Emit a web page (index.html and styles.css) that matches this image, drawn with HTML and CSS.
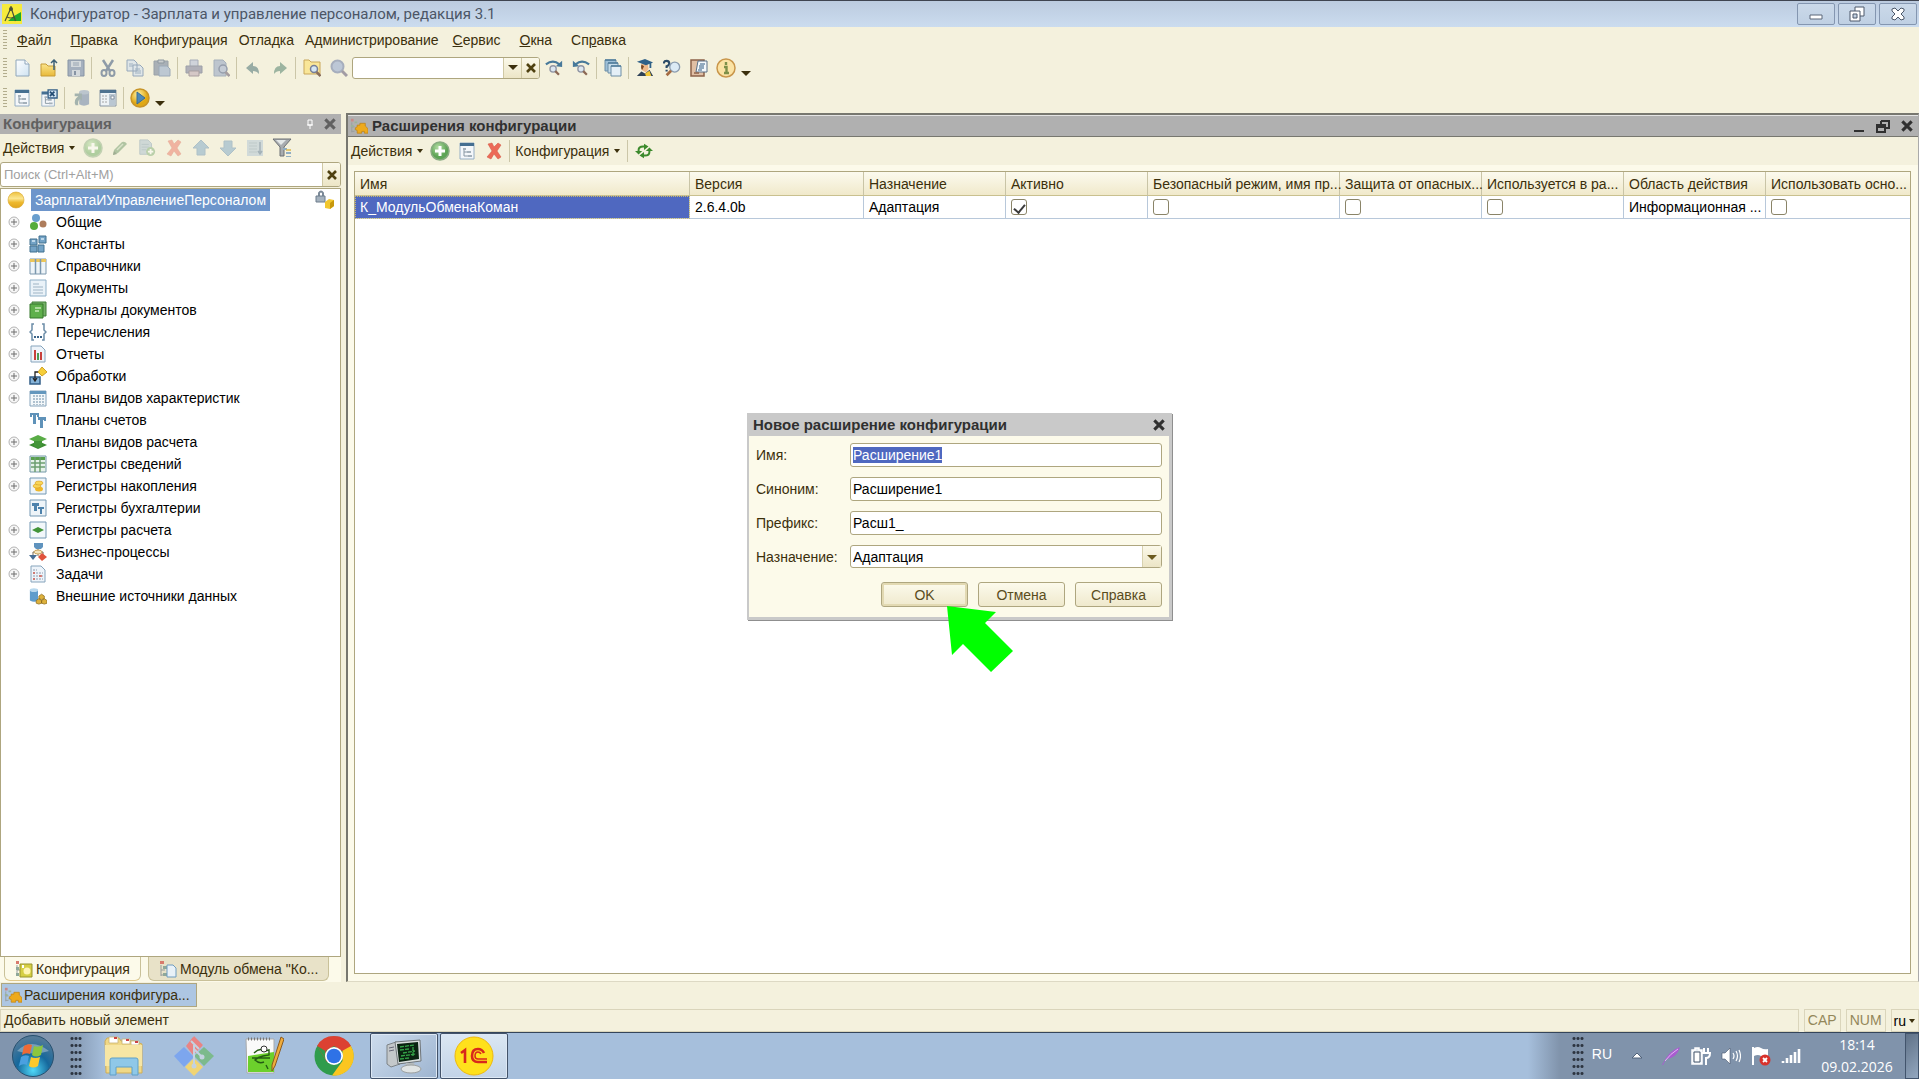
FILE: index.html
```html
<!DOCTYPE html>
<html lang="ru">
<head>
<meta charset="utf-8">
<title>Конфигуратор</title>
<link rel="stylesheet" href="styles.css">
</head>
<body>
<svg class="defs" aria-hidden="true">
  <defs>
    <linearGradient id="g-paper" x1="0" y1="0" x2="1" y2="1"><stop offset="0" stop-color="#fff"/><stop offset="1" stop-color="#cfe3f2"/></linearGradient>
    <linearGradient id="g-folder" x1="0" y1="0" x2="0" y2="1"><stop offset="0" stop-color="#fbe58c"/><stop offset="1" stop-color="#e8b93a"/></linearGradient>
    <radialGradient id="g-gold" cx=".4" cy=".3"><stop offset="0" stop-color="#fff3a8"/><stop offset="1" stop-color="#e0a814"/></radialGradient>
    <linearGradient id="g-ball" x1="0" y1="0" x2="0" y2="1"><stop offset="0" stop-color="#eec03c"/><stop offset=".4" stop-color="#fbe690"/><stop offset=".65" stop-color="#eeb92e"/><stop offset="1" stop-color="#e0a41c"/></linearGradient>
    <radialGradient id="g-green" cx=".4" cy=".3"><stop offset="0" stop-color="#b4dca4"/><stop offset="1" stop-color="#5da455"/></radialGradient>
    <radialGradient id="g-orb" cx=".5" cy=".85" r=".8"><stop offset="0" stop-color="#4fd8f8"/><stop offset=".5" stop-color="#16689c"/><stop offset="1" stop-color="#547a98"/></radialGradient>
  </defs>
  <symbol id="i-new" viewBox="0 0 18 18"><path d="M3 1h9l4 4v12H3z" fill="url(#g-paper)" stroke="#8fa6ba"/><path d="M12 1v4h4" fill="#fff" stroke="#8fa6ba"/></symbol>
  <symbol id="i-open" viewBox="0 0 18 18"><path d="M1 5h5l2 2h7v10H1z" fill="url(#g-folder)" stroke="#c69b36"/><path d="M14 11V2M11 4l3-3 3 3" fill="none" stroke="#3c6078" stroke-width="1.5"/></symbol>
  <symbol id="i-save" viewBox="0 0 18 18"><path d="M1 1h16v16H1z" fill="#a5b0be" stroke="#8794a4"/><path d="M4 2h10v6H4zM5 11h8v6H5z" fill="#d4d9dc"/><path d="M6 4h6M6 6h6" stroke="#98a4b2"/><path d="M7 12h2v4H7z" fill="#8794a4"/></symbol>
  <symbol id="i-cut" viewBox="0 0 18 18"><path d="M4 1l7 11M14 1L7 12" stroke="#8e9ba8" stroke-width="2.5"/><ellipse cx="5" cy="14" rx="2.5" ry="3" fill="none" stroke="#8e9ba8" stroke-width="2"/><ellipse cx="13" cy="14" rx="2.5" ry="3" fill="none" stroke="#8e9ba8" stroke-width="2"/></symbol>
  <symbol id="i-copy" viewBox="0 0 18 18"><path d="M1 1h7l3 3v8H1zM7 6h7l3 3v8H7z" fill="#dfe6e8" stroke="#96a8ba"/><path d="M3 5h4M3 7h4M9 10h5M9 12h6M9 14h6" stroke="#9eb0c0"/></symbol>
  <symbol id="i-paste" viewBox="0 0 18 18"><path d="M1 2h14v14H1z" fill="#a9b0b6" stroke="#9aa2a8"/><path d="M5 1h6v3H5z" fill="#c9cdce" stroke="#8d979f"/><path d="M6 7h8l3 3v7H6z" fill="#bdc8d2" stroke="#9caab8"/></symbol>
  <symbol id="i-print" viewBox="0 0 18 18"><path d="M5 1h8v7H5z" fill="#cfd3da" stroke="#a6acb8"/><path d="M1 7h16v7H1z" fill="#b0b0b8" stroke="#9da0a8"/><path d="M4 12h10v5H4z" fill="#d5c8c6" stroke="#a99f9f"/></symbol>
  <symbol id="i-preview" viewBox="0 0 18 18"><path d="M2 1h9l3 3v13H2z" fill="#bdc5ce" stroke="#a6b0ba"/><circle cx="11" cy="10" r="4" fill="#c4cbd4" stroke="#969eac" stroke-width="1.5"/><path d="M13.500 13l4 4" stroke="#a59d9f" stroke-width="2.5"/></symbol>
  <symbol id="i-undo" viewBox="0 0 18 18"><path d="M2 9l7-6v4q6 0 6 8-2-3-6-3v3z" fill="#98aca4"/></symbol>
  <symbol id="i-redo" viewBox="0 0 18 18"><path d="M16 9l-7-6v4q-6 0-6 8 2-3 6-3v3z" fill="#9cb4a0"/></symbol>
  <symbol id="i-findin" viewBox="0 0 18 18"><path d="M1 1h5l2 2h9v12H1z" fill="#f9e698" stroke="#c9a75a"/><circle cx="11" cy="10" r="3.500" fill="#d5e6f2" stroke="#777f98" stroke-width="1.500"/><path d="M13.500 13l4 4" stroke="#8a6f5c" stroke-width="2.500"/></symbol>
  <symbol id="i-mag" viewBox="0 0 18 18"><circle cx="7.500" cy="7.500" r="6" fill="#bcc7d6" stroke="#a6aebd" stroke-width="2"/><path d="M12 12l5 5" stroke="#a29ca4" stroke-width="3"/></symbol>
  <symbol id="i-next" viewBox="0 0 20 18"><path d="M1 5q8-6 15 0" fill="none" stroke="#47799a" stroke-width="2.500"/><path d="M19 1v7l-7-1z" fill="#47799a"/><circle cx="9" cy="10" r="3.500" fill="#dce7f0" stroke="#9196a4" stroke-width="1.500"/><path d="M11.500 12.500l4 4" stroke="#8c6854" stroke-width="2.500"/></symbol>
  <symbol id="i-prev" viewBox="0 0 20 18"><path d="M19 5q-8-6-15 0" fill="none" stroke="#47799a" stroke-width="2.500"/><path d="M1 1v7l7-1z" fill="#47799a"/><circle cx="10" cy="10" r="3.500" fill="#dce7f0" stroke="#9196a4" stroke-width="1.500"/><path d="M12.500 12.500l4 4" stroke="#8c6854" stroke-width="2.500"/></symbol>
  <symbol id="i-windows" viewBox="0 0 18 18"><path d="M1 1h11v11H1z" fill="#9dbfd8" stroke="#6d8ea6"/><path d="M4 4h10v10H4z" fill="#c6dcea" stroke="#6d8ea6"/><path d="M7 7h10v10H7z" fill="#e4eff7" stroke="#6d8ea6"/><path d="M1 1h11M4 4h10M7 7h10" stroke="#4f7c9c" stroke-width="1.500"/></symbol>
  <symbol id="i-grad" viewBox="0 0 20 20"><path d="M1 19l5-5 4 2 5-4 4 7z" fill="#2e4258"/><path d="M10 16l5-3 2 6h-6z" fill="#f2c838"/><path d="M6 5h7l1 6-3 4-5-3z" fill="#eeb98a"/><path d="M6 6q-1 5 1 6l2-4z" fill="#7a4a26"/><path d="M1 3l9-3 9 4-8 3z" fill="#2f6188"/><path d="M16 4v6" stroke="#2f6188" stroke-width="2"/></symbol>
  <symbol id="i-qmag" viewBox="0 0 20 18"><path d="M1 4q0-3 3-3t3 3q0 2-3 3v2M4 11v2" fill="none" stroke="#2c4c68" stroke-width="2.400"/><circle cx="13" cy="8" r="5.500" fill="#dbeaf5" stroke="#8b9db0" stroke-width="1.500"/><path d="M9 12l-5 5" stroke="#a46b42" stroke-width="3"/></symbol>
  <symbol id="i-docs" viewBox="0 0 18 18"><path d="M1 1h13v16H1z" fill="#e0bfa4" stroke="#8c6248" stroke-width="1.500"/><path d="M8 2h9v11H6z" fill="#f4f8fb" stroke="#5b7187"/><path d="M10 5h5M9 7h5M9 9h5M8 11h4" stroke="#315c84" stroke-width="1.200"/><path d="M4 14h5" stroke="#8c6248" stroke-width="1.500"/></symbol>
  <symbol id="i-info" viewBox="0 0 20 20"><circle cx="10" cy="10" r="9" fill="#fbe3a4" stroke="#c9964a" stroke-width="1.500"/><path d="M10 4v3M8 9h2.500v6M8 15h5" fill="none" stroke="#7d9048" stroke-width="2.400"/></symbol>
  <symbol id="i-tree" viewBox="0 0 18 18"><path d="M2 1h14v16H2z" fill="#f4f7fa" stroke="#96aec4"/><path d="M2 1h14v3H2z" fill="#456f91"/><path d="M6 7v7h5M6 10h4" fill="none" stroke="#8796a2"/><path d="M5 6h3v2H5zM9 9h4v2H9zM10 13h4v2h-4z" fill="#a4b0ba"/></symbol>
  <symbol id="i-treex" viewBox="0 0 20 20"><use href="#i-tree" x="0" y="2" width="18" height="18"/><path d="M9 1h10v9H9z" fill="#d5e6f4" stroke="#345f86" stroke-width="1.500"/><path d="M11 3l5 5M16 3l-5 5" stroke="#244d74" stroke-width="2"/></symbol>
  <symbol id="i-db" viewBox="0 0 20 20"><path d="M8 3v14q5 3 11 0V3" fill="#a9b4c0"/><ellipse cx="13.500" cy="3.500" rx="5.500" ry="2.500" fill="#bbc5cd"/><path d="M4 18q-3-6 3-10H3V5h8v8l-2-2q-3 2-2 7z" fill="#a4b3ae"/></symbol>
  <symbol id="i-form" viewBox="0 0 18 18"><path d="M1 1h16v16H1z" fill="#eef3f6" stroke="#8795a3"/><path d="M1 1h16v3H1z" fill="#4f7390"/><path d="M10 5h6v11h-6z" fill="#bac7d2"/><path d="M3 7h2M6 7h2M3 10h2M6 10h2M3 13h2M6 13h2" stroke="#a4a4a4"/><path d="M12 7h3v3h-3z" fill="#fff" stroke="#8795a3"/></symbol>
  <symbol id="i-play" viewBox="0 0 20 20"><circle cx="10" cy="10" r="9" fill="url(#g-gold)" stroke="#c79428" stroke-width="1.500"/><path d="M7 4l8 6-8 6z" fill="#4d89b8" stroke="#386c94"/></symbol>
  <symbol id="i-add" viewBox="0 0 20 20"><circle cx="10" cy="10" r="9" fill="url(#g-green)" stroke="#87ab80" stroke-width="1.500"/><path d="M10 5v10M5 10h10" stroke="#fff" stroke-width="3"/></symbol>
  <symbol id="i-pencil" viewBox="0 0 18 18"><path d="M2 16l1-5 8-8q3-1 5 2l-9 9z" fill="#5f8f5c"/><path d="M2 16l1-4 3 3z" fill="#3c5c3a"/><path d="M6 11l6-6" stroke="#b7d0b0" stroke-width="1.500"/></symbol>
  <symbol id="i-docadd" viewBox="0 0 20 20"><path d="M2 1h9l4 4v12H2z" fill="#a4bccf" stroke="#7896ae"/><path d="M4 6h8M4 9h8M4 12h5" stroke="#7896ae"/><circle cx="14" cy="14" r="5" fill="#73a86c"/><path d="M14 11v6M11 14h6" stroke="#fff" stroke-width="2"/></symbol>
  <symbol id="i-del" viewBox="0 0 18 18"><path d="M3 2l4-1 2 4 4-4 3 2-4 6 4 6-3 2-4-5-3 5-4-2 5-6z" fill="#ec6a58" stroke="#d0523f" stroke-width=".5"/></symbol>
  <symbol id="i-up" viewBox="0 0 18 18"><path d="M9 1l8 8h-4v7H5V9H1z" fill="#6f9fc4" stroke="#5c88ae"/></symbol>
  <symbol id="i-down" viewBox="0 0 18 18"><path d="M9 17l8-8h-4V2H5v7H1z" fill="#6f9fc4" stroke="#5c88ae"/></symbol>
  <symbol id="i-sort" viewBox="0 0 18 18"><path d="M1 1h16v16H1z" fill="#a8c0d6"/><path d="M3 4h8M3 7h8M3 10h8M3 13h8" stroke="#819bb2"/><path d="M14 3v11M12 12l2 3 2-3" fill="none" stroke="#45688c" stroke-width="1.500"/></symbol>
  <symbol id="i-filter" viewBox="0 0 20 20"><path d="M1 1h18l-7 8v9H8V9z" fill="#a8acb0" stroke="#6c7074"/><path d="M4 2h10l-5 5z" fill="#e4e8e8"/><path d="M11 10h4v2h-4zM14 14h5v2h-5zM14 18h5v1h-5z" fill="#91aec3"/><path d="M14 12h5" stroke="#dcb84c" stroke-width="1.500"/></symbol>
  <symbol id="i-refresh" viewBox="0 0 20 18"><path d="M4 10V8q0-4 5-4h2M16 8v2q0 4-5 4H9" fill="none" stroke="#3c8a2c" stroke-width="2.200"/><path d="M10 1l5 3-5 4zM10 10l-5 4 5 3z" fill="#3c8a2c"/><path d="M0 9h8l-4 4zM12 9h8l-4-4z" fill="#3c8a2c"/></symbol>
  <symbol id="i-puzzle" viewBox="0 0 20 18"><path d="M1 1h3v3H1z" fill="#c88a88"/><path d="M2 5v11M2 10h3M2 15h3" stroke="#979d9d" fill="none"/><path d="M5 4h3v2H5zM1 8h3v2H1zM5 12h3v2H5z" fill="#9bb29a"/><path d="M8 8h3V6h6v3l3 3v5h-4v-2h-3v2H8v-3l-2-1v-2l2-1z" fill="#eeaa1c" stroke="#bd8214" stroke-width=".8" stroke-linejoin="round"/></symbol>
  <symbol id="i-ballw" viewBox="0 0 18 18"><path d="M1 1h3v3H1z" fill="#d87a6c"/><path d="M2 5v11M2 10h3" stroke="#979d9d"/><path d="M1 7h3v3H1zM1 13h3v3H1z" fill="#8fa89a"/><path d="M5 4h12v13H5z" fill="#d6cf44" stroke="#98942c"/><circle cx="12" cy="11" r="3.500" fill="#fff5b4"/><path d="M7 5h2v3H7z" fill="#fff"/></symbol>
  <symbol id="i-docw" viewBox="0 0 18 18"><path d="M1 1h4v3H1z" fill="#d87a6c"/><path d="M2 5v11M2 10h4M2 15h4" stroke="#979d9d"/><path d="M4 6h4v3H4zM4 13h4v3H4z" fill="#8fa89a"/><path d="M8 5h6l3 3v9H8z" fill="#e8f1f8" stroke="#6f9cc0"/></symbol>
  <symbol id="i-plus" viewBox="0 0 12 12"><circle cx="6" cy="6" r="5" fill="#f6f6f6" stroke="#b5b5b5"/><path d="M6 3v6M3 6h6" stroke="#6e6e6e"/></symbol>
  <symbol id="t-root" viewBox="0 0 18 18"><circle cx="9" cy="9" r="8" fill="url(#g-ball)" stroke="#d6a52a" stroke-width=".6"/></symbol>
  <symbol id="t-common" viewBox="0 0 18 18"><circle cx="7" cy="5" r="4" fill="#6a9fce"/><circle cx="5" cy="13" r="4" fill="#56ac3c"/><circle cx="14" cy="11" r="3.500" fill="#ae7d5c"/></symbol>
  <symbol id="t-const" viewBox="0 0 18 18"><path d="M10 1h7v7h-7zM1 4h7v6H1zM1 11h7v6H1zM9 10h6v7H9z" fill="#74a3c6" stroke="#40708f"/><path d="M12 3h3v2h-3zM3 5h3v2H3z" fill="#bdd8ea"/></symbol>
  <symbol id="t-ref" viewBox="0 0 18 18"><path d="M1 2h16v15H1z" fill="#eef4f8" stroke="#7c98ae"/><path d="M1 2h16v3H1z" fill="#ecc65a"/><path d="M6.500 2v15M11.500 2v15" stroke="#7c98ae" stroke-width="1.500"/></symbol>
  <symbol id="t-doc" viewBox="0 0 18 18"><path d="M1 1h16v16H1z" fill="#eaf2f8" stroke="#8fb0c8"/><path d="M4 5h6M4 8h10M4 11h10M4 14h10" stroke="#9fb4c4"/></symbol>
  <symbol id="t-journal" viewBox="0 0 18 18"><path d="M3 1h14v14H3z" fill="#76b268" stroke="#417e38"/><path d="M1 3h13v14H1z" fill="#5fb04c" stroke="#37782c"/><path d="M6 7h6M6 10h4" stroke="#c8e8b8" stroke-width="1.500"/></symbol>
  <symbol id="t-enum" viewBox="0 0 18 18"><path d="M5 1H3v6L1 9l2 2v6h2M13 1h2v6l2 2-2 2v6h-2" fill="none" stroke="#6c8da8" stroke-width="1.500"/><path d="M5 14h2M8 14h2M11 14h2" stroke="#3c6488" stroke-width="2"/></symbol>
  <symbol id="t-report" viewBox="0 0 18 18"><path d="M2 1h10l4 4v12H2z" fill="#eef4fa" stroke="#86a4bc"/><path d="M5 5h2v10H5z" fill="#c8403c"/><path d="M8 8h2v7H8z" fill="#4d9c54"/><path d="M11 7h2v8h-2z" fill="#c8403c"/></symbol>
  <symbol id="t-proc" viewBox="0 0 18 18"><path d="M13 0l5 5-5 4-4-4z" fill="#f6cf3a" stroke="#d0a226"/><path d="M1 10h10v7H1z" fill="#86b3d8" stroke="#335f88" stroke-width="1.500"/><path d="M9 5H6v8M4 11l2 3 2-3" fill="none" stroke="#222" stroke-width="1.300"/></symbol>
  <symbol id="t-char" viewBox="0 0 18 18"><path d="M1 2h16v15H1z" fill="#f4f8fa" stroke="#86a4bc"/><path d="M1 2h16v3H1z" fill="#6497bd"/><path d="M5 6v10M8 6v10M11 6v10M14 6v10" stroke="#6a8aa4" stroke-dasharray="2 1"/></symbol>
  <symbol id="t-acc" viewBox="0 0 18 18"><path d="M1 2h9v4H8V4H7v9H4V4H3v2H1zM9 6h8v4h-2V9h-1v8h-3V9H9z" fill="#5f92b9"/></symbol>
  <symbol id="t-calc" viewBox="0 0 18 18"><path d="M0 12l9-4 9 4-9 4z" fill="#3c8c32"/><path d="M0 6l9-4 9 4-9 4z" fill="#59ac46"/><path d="M5 8h8v5l-4 2-4-2z" fill="#439538"/></symbol>
  <symbol id="t-info" viewBox="0 0 18 18"><path d="M1 1h16v16H1z" fill="#e6f2ea" stroke="#7599a8"/><path d="M2 2h14v3H2z" fill="#59a04c"/><path d="M6 2v15M11 2v15M2 8h14M2 12h14" stroke="#6c9e70" stroke-width="1.500"/></symbol>
  <symbol id="t-accum" viewBox="0 0 18 18"><path d="M1 1h16v16H1z" fill="#eef4f8" stroke="#7599b4"/><ellipse cx="10" cy="12" rx="4" ry="2.500" fill="#eeb72a"/><ellipse cx="8" cy="9" rx="4" ry="2" fill="#f8d558" stroke="#d89c1c" stroke-width=".6"/><ellipse cx="10" cy="6" rx="4" ry="2" fill="#f8d558" stroke="#d89c1c" stroke-width=".6"/></symbol>
  <symbol id="t-book" viewBox="0 0 18 18"><path d="M1 1h16v16H1z" fill="#eef4f8" stroke="#7599b4"/><path d="M3 4h7v3H8v5H5V7H3zM9 8h6v2h-2v5h-2v-5H9z" fill="#4d82ac"/></symbol>
  <symbol id="t-rcalc" viewBox="0 0 18 18"><path d="M1 1h16v16H1z" fill="#f2f7fa" stroke="#7599b4"/><path d="M3 9l6-3 6 3-6 3z" fill="#429438"/></symbol>
  <symbol id="t-bp" viewBox="0 0 18 18"><path d="M9 5v8M9 9H4v4M9 9h5v4" stroke="#776a58" fill="none"/><path d="M5 0h9v4l-2 2H7L5 4z" fill="#5f93be"/><ellipse cx="9" cy="9" rx="4" ry="2" fill="#f4e4bc" stroke="#c9a560"/><path d="M0 12h8l-4 5z" fill="#466d94"/><path d="M13 10l5 4-5 4-4-4z" fill="#e0533c"/></symbol>
  <symbol id="t-task" viewBox="0 0 18 18"><path d="M2 1h10l4 4v12H2z" fill="#eef4fa" stroke="#86a4bc"/><path d="M4 5h4M4 8h10M4 11h10M4 14h10" stroke="#8c9cb0" stroke-dasharray="2 1"/><path d="M4 8h2M10 11h3M4 14h2" stroke="#d46055" stroke-width="1.500"/></symbol>
  <symbol id="t-ext" viewBox="0 0 20 18"><path d="M1 2v12q5 3 9 0V2" fill="#5e9ccc"/><ellipse cx="5.500" cy="2.500" rx="4.500" ry="2" fill="#b8d8ee"/><path d="M14 7l3 2v3l-3 1-3-1V9zM11 12l3 2v3l-3 1-3-1v-3zM17 12l3 2v3l-3 1-3-1v-3z" fill="#ddb13c" stroke="#8a6818" stroke-width=".8"/></symbol>
  <symbol id="i-lock" viewBox="0 0 20 20"><path d="M4 6V3q2-3 4 0v3" fill="none" stroke="#7c8a98" stroke-width="2"/><path d="M1 6h9v6H1z" fill="#a5b2be" stroke="#6c7c8c"/><path d="M10 12l4-3 5 1v6l-4 3-5-1z" fill="#f2c72e"/><path d="M15 13v6l4-3v-6z" fill="#c8980c"/></symbol>
  <symbol id="i-x" viewBox="0 0 12 12"><path d="M2 2l8 8M10 2l-8 8" stroke="currentColor" stroke-width="2.600" fill="none"/></symbol>
</svg>

<header class="titlebar">
  <svg class="app-icon" viewBox="0 0 20 20"><path d="M0 0h20v20H0z" fill="#f6ea3e"/><path d="M6 17h13V8l-7 4z" fill="#1fa82c"/><path d="M9 2v3M8.500 5L3 17M9.500 5l4 12M5 13q4 2 7 0" fill="none" stroke="#4a5238" stroke-width="1.200"/><circle cx="9" cy="5" r="2" fill="#4a5238"/></svg>
  <h1>Конфигуратор - Зарплата и управление персоналом, редакция 3.1</h1>
  <div class="win-buttons">
    <button aria-label="Свернуть"><svg viewBox="0 0 16 16"><path d="M2 9h12v4H2z" fill="#fff" stroke="#5a6678"/></svg></button>
    <button aria-label="Восстановить"><svg viewBox="0 0 16 16"><path d="M6 1h9v9H6z" fill="#fff" stroke="#4c586a"/><path d="M1 5h10v10H1z" fill="#fff" stroke="#4c586a"/><path d="M4 8h4v4H4z" fill="#c4d2e2" stroke="#4c586a"/></svg></button>
    <button aria-label="Закрыть"><svg viewBox="0 0 16 16"><path d="M2 3l3-1 3 3 3-3 3 1v2l-3 3 3 3v2l-3 1-3-3-3 3-3-1v-2l3-3-3-3z" fill="#fff" stroke="#4c586a"/></svg></button>
  </div>
</header>

<nav class="menubar">
  <span class="grip"></span>
  <a href="#"><u>Ф</u>айл</a><a href="#"><u>П</u>равка</a><a href="#">Конфигурация</a><a href="#">Отладка</a><a href="#">Администрирование</a><a href="#"><u>С</u>ервис</a><a href="#"><u>О</u>кна</a><a href="#">Сп<u>р</u>авка</a>
</nav>

<div class="toolbar main">
  <span class="grip"></span>
  <button aria-label="Новый"><svg><use href="#i-new"/></svg></button>
  <button aria-label="Открыть"><svg><use href="#i-open"/></svg></button>
  <button aria-label="Сохранить"><svg><use href="#i-save"/></svg></button>
  <span class="sep"></span>
  <button aria-label="Вырезать"><svg><use href="#i-cut"/></svg></button>
  <button aria-label="Копировать"><svg><use href="#i-copy"/></svg></button>
  <button aria-label="Вставить"><svg><use href="#i-paste"/></svg></button>
  <span class="sep"></span>
  <button aria-label="Печать"><svg><use href="#i-print"/></svg></button>
  <button aria-label="Просмотр"><svg><use href="#i-preview"/></svg></button>
  <span class="sep"></span>
  <button aria-label="Отменить"><svg><use href="#i-undo"/></svg></button>
  <button aria-label="Вернуть"><svg><use href="#i-redo"/></svg></button>
  <span class="sep"></span>
  <button aria-label="Поиск в файлах"><svg><use href="#i-findin"/></svg></button>
  <button aria-label="Найти"><svg><use href="#i-mag"/></svg></button>
  <div class="combo find">
    <input type="text" aria-label="Строка поиска">
    <button aria-label="Выбрать"><span class="caret big"></span></button>
    <button aria-label="Очистить"><svg><use href="#i-x"/></svg></button>
  </div>
  <button aria-label="Найти далее"><svg><use href="#i-next"/></svg></button>
  <button aria-label="Найти ранее"><svg><use href="#i-prev"/></svg></button>
  <span class="sep"></span>
  <button aria-label="Окна"><svg><use href="#i-windows"/></svg></button>
  <span class="sep"></span>
  <button aria-label="Синтаксис-помощник"><svg><use href="#i-grad"/></svg></button>
  <button aria-label="Поиск справки"><svg><use href="#i-qmag"/></svg></button>
  <button aria-label="Шаблоны"><svg><use href="#i-docs"/></svg></button>
  <button class="round" aria-label="О программе"><svg><use href="#i-info"/></svg></button>
  <span class="caret low"></span>
</div>

<div class="toolbar main second">
  <span class="grip"></span>
  <button aria-label="Открыть конфигурацию"><svg><use href="#i-tree"/></svg></button>
  <button aria-label="Закрыть конфигурацию"><svg><use href="#i-treex"/></svg></button>
  <span class="sep"></span>
  <button aria-label="Обновить базу"><svg><use href="#i-db"/></svg></button>
  <button aria-label="Окно конфигурации"><svg><use href="#i-form"/></svg></button>
  <span class="sep"></span>
  <button class="round" aria-label="Начать отладку"><svg><use href="#i-play"/></svg></button>
  <span class="caret low"></span>
</div>

<main class="workspace">
  <aside class="side">
    <div class="side-title"><h2>Конфигурация</h2>
      <svg class="pin" viewBox="0 0 8 10"><path d="M2 1h4v5H2zM1 6h6M4 6v4" fill="none" stroke="#fff"/></svg>
      <svg class="close"><use href="#i-x"/></svg></div>
    <div class="toolbar local">
      <button class="drop">Действия<span class="caret"></span></button>
      <button class="off round" aria-label="Добавить"><svg><use href="#i-add"/></svg></button>
      <button class="off" aria-label="Изменить"><svg><use href="#i-pencil"/></svg></button>
      <button class="off" aria-label="Скопировать"><svg><use href="#i-docadd"/></svg></button>
      <button class="off" aria-label="Удалить"><svg><use href="#i-del"/></svg></button>
      <button class="off" aria-label="Вверх"><svg><use href="#i-up"/></svg></button>
      <button class="off" aria-label="Вниз"><svg><use href="#i-down"/></svg></button>
      <button class="off" aria-label="Упорядочить"><svg><use href="#i-sort"/></svg></button>
      <button class="round" aria-label="Отбор"><svg><use href="#i-filter"/></svg></button>
    </div>
    <div class="combo search">
      <input type="text" placeholder="Поиск (Ctrl+Alt+M)" aria-label="Поиск">
      <button aria-label="Очистить поиск"><svg><use href="#i-x"/></svg></button>
    </div>
    <ul class="tree">
      <li class="root"><svg class="ic"><use href="#t-root"/></svg><span class="label">ЗарплатаИУправлениеПерсоналом</span><svg class="lock"><use href="#i-lock"/></svg></li>
      <li><svg class="ex"><use href="#i-plus"/></svg><svg class="ic"><use href="#t-common"/></svg>Общие</li>
      <li><svg class="ex"><use href="#i-plus"/></svg><svg class="ic"><use href="#t-const"/></svg>Константы</li>
      <li><svg class="ex"><use href="#i-plus"/></svg><svg class="ic"><use href="#t-ref"/></svg>Справочники</li>
      <li><svg class="ex"><use href="#i-plus"/></svg><svg class="ic"><use href="#t-doc"/></svg>Документы</li>
      <li><svg class="ex"><use href="#i-plus"/></svg><svg class="ic"><use href="#t-journal"/></svg>Журналы документов</li>
      <li><svg class="ex"><use href="#i-plus"/></svg><svg class="ic"><use href="#t-enum"/></svg>Перечисления</li>
      <li><svg class="ex"><use href="#i-plus"/></svg><svg class="ic"><use href="#t-report"/></svg>Отчеты</li>
      <li><svg class="ex"><use href="#i-plus"/></svg><svg class="ic"><use href="#t-proc"/></svg>Обработки</li>
      <li><svg class="ex"><use href="#i-plus"/></svg><svg class="ic"><use href="#t-char"/></svg>Планы видов характеристик</li>
      <li><svg class="ex"></svg><svg class="ic"><use href="#t-acc"/></svg>Планы счетов</li>
      <li><svg class="ex"><use href="#i-plus"/></svg><svg class="ic"><use href="#t-calc"/></svg>Планы видов расчета</li>
      <li><svg class="ex"><use href="#i-plus"/></svg><svg class="ic"><use href="#t-info"/></svg>Регистры сведений</li>
      <li><svg class="ex"><use href="#i-plus"/></svg><svg class="ic"><use href="#t-accum"/></svg>Регистры накопления</li>
      <li><svg class="ex"></svg><svg class="ic"><use href="#t-book"/></svg>Регистры бухгалтерии</li>
      <li><svg class="ex"><use href="#i-plus"/></svg><svg class="ic"><use href="#t-rcalc"/></svg>Регистры расчета</li>
      <li><svg class="ex"><use href="#i-plus"/></svg><svg class="ic"><use href="#t-bp"/></svg>Бизнес-процессы</li>
      <li><svg class="ex"><use href="#i-plus"/></svg><svg class="ic"><use href="#t-task"/></svg>Задачи</li>
      <li><svg class="ex"></svg><svg class="ic"><use href="#t-ext"/></svg>Внешние источники данных</li>
    </ul>
    <div class="tabs">
      <button class="tab active"><svg><use href="#i-ballw"/></svg>Конфигурация</button>
      <button class="tab"><svg><use href="#i-docw"/></svg>Модуль обмена "Ко...</button>
    </div>
  </aside>

  <section class="window">
    <div class="window-title"><svg class="mark"><use href="#i-puzzle"/></svg><h2>Расширения конфигурации</h2>
      <div class="mdi">
        <svg viewBox="0 0 14 14"><path d="M2 12h10" stroke="#303030" stroke-width="2"/></svg>
        <svg viewBox="0 0 14 14"><path d="M5 2h8v7h-3M5 2v3" fill="none" stroke="#303030" stroke-width="2"/><path d="M1 6h8v7H1zM1 8h8" fill="none" stroke="#303030" stroke-width="2"/></svg>
        <svg><use href="#i-x"/></svg>
      </div>
    </div>
    <div class="toolbar local">
      <button class="drop">Действия<span class="caret"></span></button>
      <button class="round" aria-label="Добавить"><svg><use href="#i-add"/></svg></button>
      <button aria-label="Открыть"><svg><use href="#i-tree"/></svg></button>
      <button aria-label="Удалить"><svg><use href="#i-del"/></svg></button>
      <span class="sep"></span>
      <button class="drop">Конфигурация<span class="caret"></span></button>
      <span class="sep"></span>
      <button aria-label="Обновить"><svg><use href="#i-refresh"/></svg></button>
    </div>
    <div class="list">
      <table>
        <colgroup><col class="c-name"><col class="c-ver"><col class="c-std"><col class="c-std"><col class="c-safe"><col class="c-std"><col class="c-std"><col class="c-std"><col></colgroup>
        <thead><tr><th>Имя</th><th>Версия</th><th>Назначение</th><th>Активно</th><th>Безопасный режим, имя пр...</th><th>Защита от опасных...</th><th>Используется в ра...</th><th>Область действия</th><th>Использовать осно...</th></tr></thead>
        <tbody><tr><td class="sel">К_МодульОбменаКоман</td><td>2.6.4.0b</td><td>Адаптация</td><td><input type="checkbox" checked aria-label="Активно"></td><td><input type="checkbox" aria-label="Безопасный режим"></td><td><input type="checkbox" aria-label="Защита от опасных действий"></td><td><input type="checkbox" aria-label="Используется"></td><td>Информационная ...</td><td><input type="checkbox" aria-label="Использовать основные роли"></td></tr></tbody>
      </table>
    </div>
  </section>
</main>

<div class="windowbar"><button><svg><use href="#i-puzzle"/></svg>Расширения конфигура...</button></div>
<footer class="status"><span class="msg">Добавить новый элемент</span><span class="cell">CAP</span><span class="cell">NUM</span><span class="cell lang">ru<span class="caret"></span></span></footer>

<div class="taskbar">
  <button class="start" aria-label="Пуск"><svg viewBox="0 0 44 44"><circle cx="22" cy="22" r="20.500" fill="url(#g-orb)" stroke="#27506f"/><path d="M6 17Q20 3 38 17 22 22 6 17z" fill="#b8ccd8" opacity=".5"/><path d="M13 12q4-3 8-1l-2 9q-4-2-8 1z" fill="#ee6a35"/><path d="M23 12q4 2 9-1l-2 10q-5 3-9 0z" fill="#8cc63e"/><path d="M10 23q4-3 8-1l-2 9q-4-2-8 1z" fill="#4aa0e0"/><path d="M20 23q4 2 9 0l-2 9q-5 3-9 0z" fill="#fbc92c"/></svg></button>
  <span class="dots"></span>
  <button class="task" aria-label="Проводник"><svg viewBox="0 0 40 40"><path d="M1 5l2-3h12l2 3h13l8 3v29H2z" fill="#f0d886" stroke="#cfae58"/><path d="M5 1h9v6H5zM18 3h8v5h-8zM27 5h8v4h-8z" fill="#fff" stroke="#c9b473" stroke-width=".8"/><path d="M10 2h3M22 4h3M31 6h3" stroke="#c44" stroke-width="2"/><path d="M1 9h37v21H1z" fill="#f7e6a4"/><path d="M6 39V24q0-2 2-2h24q2 0 2 2v15h-6v-8H12v8z" fill="#8fc8e8" stroke="#5fa0c8"/></svg></button>
  <button class="task" aria-label="Git"><svg viewBox="0 0 40 40"><path d="M20 0l9 9-9 9-3-3 3-3-4-4z" fill="#e98484"/><path d="M19 1l9 9-9 9-7-9z" fill="#e98484"/><path d="M10 11l10 10-10 10L0 20z" fill="#7da6ee"/><path d="M30 11l10 9-10 10-10-10z" fill="#7cba8c"/><path d="M20 22l9 9-9 9-9-9z" fill="#f0d474"/><path d="M17 5l8 8M20 9v20M20 13l8 8" stroke="#c4d2e0" stroke-width="2"/><circle cx="20" cy="30" r="2.500" fill="#c4d2e0"/><circle cx="28" cy="21" r="2.500" fill="#c4d2e0"/></svg></button>
  <button class="task" aria-label="Notepad++"><svg viewBox="0 0 40 40"><path d="M2 3h28v34H3z" fill="#fafafa" stroke="#aaa"/><path d="M4 20l26-4v20H4z" fill="#6cd02c"/><path d="M4 3h24" stroke="#777" stroke-width="3" stroke-dasharray="1 2"/><path d="M10 17q6-6 11-2l4-1v5l-6 1q-5 1-8 4 4 4 9 2M8 22h18M22 29l2 4" fill="none" stroke="#245c14" stroke-width="1.400"/><circle cx="20" cy="13" r="3" fill="#fff" stroke="#333"/><path d="M37 1l3 2-9 27-3 5V29z" fill="#efac3c" stroke="#8a5a20"/></svg></button>
  <button class="task" aria-label="Chrome"><svg viewBox="0 0 40 40"><circle cx="20" cy="20" r="19.500" fill="#2f9c4c"/><path d="M3 10A19.500 19.500 0 0 1 37 10H20L11.500 15z" fill="#dc4132"/><path d="M37 10A19.500 19.500 0 0 1 18 39.500L28.500 25V10z" fill="#fbc620"/><path d="M20 10h17L28 15zM3 10l10 16 3-8z" fill="#dc4132"/><path d="M3 10l9 14-1-9z" fill="#2f9c4c"/><circle cx="20" cy="20" r="9" fill="#fff"/><circle cx="20" cy="20" r="7.300" fill="#2f72e6"/></svg></button>
  <button class="task open" aria-label="Монитор"><svg viewBox="0 0 40 40"><path d="M3 9l9-3 4 2v20l-9 3-4-3z" fill="#c4c8ca" stroke="#7c8286"/><path d="M5 12l5-1M5 15l5-1" stroke="#667"/><path d="M11 6l25-2 1 21-23 3z" fill="#dadfdf" stroke="#6e7478"/><path d="M13 8l21-2 1 17-20 3z" fill="#0b2412"/><path d="M16 11l14-2M16 14l9-1M19 17l12-2M17 20l15-2M16 23l9-1M29 11v9" stroke="#35a548" stroke-width="1.300" stroke-dasharray="4 1"/><path d="M22 27h8l1 4H21z" fill="#b4babc"/><ellipse cx="27" cy="33" rx="10" ry="4" fill="#e0e4e4" stroke="#9ca0a0"/></svg></button>
  <button class="task open lit" aria-label="1С"><svg viewBox="0 0 40 40"><circle cx="20" cy="20" r="19" fill="#ffe11c" stroke="#efb80c"/><path d="M7 17l4-3v13M30 17q-2-4-6-4-6 0-6 7 0 6 6 6h9" fill="none" stroke="#d8281c" stroke-width="2.600"/><path d="M27 18q-1-2-3-2-3 0-3 4 0 3 3 3h9" fill="none" stroke="#d8281c" stroke-width="1.500"/></svg></button>
  <div class="tray">
    <span class="dots"></span>
    <span class="kbd">RU</span>
    <svg class="more" viewBox="0 0 20 20"><path d="M5 12l5-5 5 5z" fill="#fff" stroke="#51637a"/></svg>
    <svg viewBox="0 0 20 20"><path d="M1 19Q8 4 19 1q-3 11-14 12l-3 6z" fill="#a85cd0"/><path d="M4 15Q9 8 17 3" stroke="#e2b8f2" fill="none"/></svg>
    <svg viewBox="0 0 20 20"><path d="M4 2h4v2h3v14H1V4h3z" fill="#e8eef4" stroke="#fff" stroke-width="1.500"/><path d="M3 6h6v10H3z" fill="#fff" stroke="#44546a"/><path d="M13 2v4M17 2v4M11 7h8q0 5-4 5v7" fill="none" stroke="#fff" stroke-width="2"/></svg>
    <svg viewBox="0 0 20 20"><path d="M1 7h3l5-5v16l-5-5H1z" fill="#fff" stroke="#46566c" stroke-width=".6"/><path d="M12 7q2 3 0 6M15 5q3 5 0 10M18 4q3 6 0 12" fill="none" stroke="#fff" stroke-width="1.200"/></svg>
    <svg viewBox="0 0 20 20"><path d="M2 1v18" stroke="#fff" stroke-width="2"/><path d="M3 2q4-2 7 0t7 1v8q-4 1-7-1t-7 0z" fill="#fff"/><circle cx="14" cy="14" r="5.500" fill="#d8322c"/><path d="M12 12l4 4M16 12l-4 4" stroke="#fff" stroke-width="1.800"/></svg>
    <svg viewBox="0 0 20 20"><path d="M2 15v2M6 12v5M10 9v8M14 6v11M18 3v14" stroke="#fff" stroke-width="2.600"/></svg>
    <time>18:14<br>09.02.2026</time>
    <span class="peek"></span>
  </div>
</div>

<dialog class="dialog" open>
  <div class="dialog-title"><h2>Новое расширение конфигурации</h2><svg><use href="#i-x"/></svg></div>
  <form>
    <label for="f-name">Имя:</label><input id="f-name" type="text" value="Расширение1">
    <label for="f-syn">Синоним:</label><input id="f-syn" type="text" value="Расширение1">
    <label for="f-pre">Префикс:</label><input id="f-pre" type="text" value="Расш1_">
    <label for="f-use">Назначение:</label><span class="select"><select id="f-use"><option>Адаптация</option></select></span>
    <div class="actions"><button type="button" class="default">OK</button><button type="button">Отмена</button><button type="button">Справка</button></div>
  </form>
  <svg class="pointer" viewBox="0 0 67 66"><path d="M0 0l49 6-11 11 28 28-22 21-28-28-11 11z" fill="#0f0"/></svg>
</dialog>
<script src="script.js"></script>
</body>
</html>
```
FILE: styles.css
```css
:root {
  --cream: #f4f1dd;
  --pale: #fcfaea;
  --line: #aea67f;
  --ink: #3b2f0c;
  --ui: "Liberation Sans", Arial, sans-serif;
  --sys: "Open Sans", "Noto Sans", sans-serif;
}
* { box-sizing: border-box; }
body {
  margin: 0;
  min-height: 100vh;
  display: flex;
  flex-direction: column;
  background: var(--cream);
  color: var(--ink);
  font: 14px/20px var(--ui);
}
button, input, select { font: inherit; color: inherit; }
button { padding: 0; border: 0; background: none; }
h1, h2 { margin: 0; }
a { color: inherit; text-decoration: none; }
svg { display: block; flex: none; width: 18px; height: 18px; }
.defs { position: absolute; width: 0; height: 0; }

.titlebar {
  display: flex;
  align-items: center;
  height: 27px;
  padding: 0 2px;
  border-top: 1px solid #3f4450;
  background: linear-gradient(#bccbdf, #cbdcef);
}
.app-icon { width: 20px; height: 20px; }
.titlebar h1 { flex: 1; margin-left: 8px; font: 15px/24px Roboto, "Noto Sans", sans-serif; color: #4c5666; }
.win-buttons { display: flex; gap: 3px; }
.win-buttons button {
  display: grid;
  place-items: center;
  width: 38px;
  height: 22px;
  border: 1px solid #8496b0;
  border-radius: 2px;
  background: linear-gradient(#cbd9e9, #bfd0e3);
}
.win-buttons svg { width: 16px; height: 16px; }

.grip {
  flex: none;
  width: 4px;
  height: 20px;
  margin: 0 3px;
  background: repeating-linear-gradient(#b3ad8d 0 1px, transparent 1px 3px);
}
.menubar { display: flex; align-items: center; height: 26px; }
.menubar a { padding: 0 7px; }
.menubar a:nth-of-type(1), .menubar a:nth-of-type(6), .menubar a:nth-of-type(7) { padding-right: 12px; }
.menubar a:nth-of-type(2) { padding-right: 9px; }
.menubar a:nth-of-type(3), .menubar a:nth-of-type(4) { padding-right: 4px; }

.toolbar { display: flex; align-items: center; height: 29px; }
.toolbar.second { height: 31px; }
.toolbar .grip { margin-right: 1px; }
.toolbar > button { display: grid; place-items: center; width: 27px; height: 27px; }
.toolbar .round svg { width: 20px; height: 20px; }
.sep { width: 1px; height: 22px; margin: 0 2px; background: #cbc6a8; }
.caret { width: 0; height: 0; border: 3px solid transparent; border-top: 4px solid var(--ink); border-bottom: 0; }
.caret.big { border-width: 5px 5px 0; }
.caret.low { border-width: 5px 5px 0; margin: 12px 0 0 2px; }
.combo { display: flex; border: 1px solid var(--line); border-radius: 3px; background: #fff; overflow: hidden; }
.combo input { flex: 1; min-width: 0; padding: 0 3px; border: 0; outline: 0; background: none; }
.combo button {
  display: grid;
  place-items: center;
  width: 18px;
  border-left: 1px solid #cfc8a4;
  background: linear-gradient(#fbf9ea, #ece5c6);
  color: #4f4110;
}
.combo svg { width: 12px; height: 12px; }
.find { width: 188px; height: 22px; }

.workspace { flex: 1; display: grid; grid-template-columns: 341px 1fr; gap: 5px; }
.side { display: flex; flex-direction: column; min-width: 0; padding-top: 1px; }
.side-title, .window-title { display: flex; align-items: center; height: 20px; background: #b0b0b0; }
.side-title { padding: 0 4px 0 3px; color: #606060; }
.side-title h2, .window-title h2, .dialog-title h2 { flex: 1; font: bold 15px/20px var(--ui); }
.pin { width: 8px; height: 10px; margin-right: 9px; }
.close { width: 14px; height: 14px; }
.toolbar.local { height: 28px; }
.toolbar.local .drop { display: flex; align-items: center; gap: 5px; width: auto; padding: 0 3px; }
.side .drop { margin-right: 1px; }
.off { opacity: .45; }
.search { height: 25px; }
.search input { font-size: 13px; }
.search input::placeholder { color: #a0a0a0; opacity: 1; }
.tree {
  flex: 1;
  margin: 1px 0 0;
  padding: 0;
  list-style: none;
  border: 1px solid var(--line);
  background: #fff;
  color: #000;
}
.tree li { display: flex; align-items: center; height: 22px; padding-left: 7px; }
.tree .ex { width: 12px; height: 12px; margin-right: 9px; }
.tree .ic { margin-right: 9px; }
.tree .root { padding: 0 5px 0 6px; }
.tree .root .ic { margin-right: 6px; }
.tree .label { margin-right: auto; padding: 0 4px; background: #6d95cb; color: #fff; line-height: 22px; }
.lock { width: 20px; height: 20px; }
.tabs { display: flex; gap: 7px; height: 25px; padding: 0 10px 1px 4px; background: var(--pale); }
.tab {
  display: flex;
  align-items: center;
  gap: 3px;
  padding: 0 10px;
  border: 1px solid #c9c199;
  border-top: 0;
  border-radius: 0 0 6px 6px;
  background: #e8e2c8;
  white-space: nowrap;
}
.tab.active { background: var(--pale); border-bottom-color: #e0c98c; }

.window {
  display: flex;
  flex-direction: column;
  min-width: 0;
  border: 2px solid #77776f;
  border-right: 1px solid #aaa;
  border-bottom: 1px solid #ddd9c4;
  background: var(--pale);
}
.window-title { height: 22px; padding: 0 4px 0 2px; border-bottom: 1px solid #77776f; border-top: 1px solid #e4e4e4; color: #303030; }
.window-title .mark { margin-right: 4px; }
.mdi { display: flex; gap: 10px; }
.mdi svg { width: 14px; height: 14px; }
.window .local { background: var(--cream); }
.window .sep + .drop { padding-right: 5px; }
.list { flex: 1; margin: 6px 7px 7px 6px; border: 1px solid var(--line); background: #fff; }
table { width: 100%; table-layout: fixed; border-collapse: separate; border-spacing: 0; }
.c-name { width: 335px; }
.c-ver { width: 174px; }
.c-std { width: 142px; }
.c-safe { width: 192px; }
th, td { padding: 0 0 0 5px; text-align: left; font-weight: normal; white-space: nowrap; border-right: 1px solid #c9c4a6; }
th { height: 24px; border-bottom: 1px solid #c9c08f; background: linear-gradient(#fcfaee, #f0e9cb); }
td { height: 23px; line-height: 20px; color: #000; border-color: #b8c8da; border-bottom: 1px solid #b8c8da; }
th:last-child, td:last-child { border-right: 0; }
td.sel { background: #4f68c0; color: #fff; outline: 1px dotted #c8b870; outline-offset: -1px; }
input[type="checkbox"] {
  appearance: none;
  display: grid;
  place-items: center;
  width: 16px;
  height: 16px;
  margin: 0;
  border: 1px solid #8a8468;
  border-radius: 3px;
  background: #fff;
}
input[type="checkbox"]:checked::after {
  content: "";
  width: 5px;
  height: 9px;
  border: solid #3a3a3a;
  border-width: 0 2px 2px 0;
  transform: rotate(40deg);
}

.windowbar { height: 27px; padding: 1px 1px 2px; }
.windowbar button { display: flex; align-items: center; gap: 2px; height: 24px; padding: 0 6px 0 2px; border: 1px solid var(--line); background: #adc6e2; }
.status { display: flex; gap: 5px; height: 23px; line-height: 20px; }
.status span:not(.caret) { border: 1px solid #dad5bb; }
.status .msg { flex: 1; padding-left: 3px; }
.status .cell { padding: 0 3px; color: #93875a; }
.status .lang { display: flex; align-items: center; gap: 3px; padding: 0 3px 0 2px; color: #000; }

.taskbar {
  display: flex;
  align-items: center;
  height: 47px;
  border-top: 1px solid #35455a;
  background: linear-gradient(90deg, #8195ae 70px, #a6bfdc 105px, #a6bfdc 1528px, #8093ab 1560px);
}
.start { width: 66px; padding-left: 11px; }
.start svg { width: 44px; height: 44px; }
.dots {
  width: 12px;
  height: 42px;
  margin: 0 8px 0 4px;
  background: radial-gradient(circle, #2c3440 1px, transparent 2px) 0 0 / 4px 7px;
}
.task { display: grid; place-items: center; width: 68px; height: 46px; margin-right: 2px; }
.task svg { width: 40px; height: 40px; }
.task.open { border: 1px solid #43536a; border-radius: 2px; background: linear-gradient(135deg, #cddced, #9db4d0); box-shadow: inset 0 0 0 1px #dde8f4; }
.task.lit { background: linear-gradient(#dbe7f3, #c2d3e7); }
.tray { display: flex; align-items: center; margin-left: auto; gap: 10px; color: #fff; }
.tray svg { width: 20px; height: 20px; }
.tray .dots { margin: 0; }
.kbd { margin: -4px 5px 0 -2px; }
.more { margin-right: 4px; }
.tray time { width: 84px; margin: 0 -4px 0 4px; font: 14px/22px var(--sys); text-align: center; white-space: nowrap; }
.peek { width: 14px; height: 46px; border: 1px solid #42546c; background: linear-gradient(135deg, #5f7187, #93a7bf); }

.dialog {
  position: absolute;
  inset: 413px 0 auto;
  margin: 0 auto;
  width: 425px;
  padding: 0;
  border: solid #c9c9c9;
  border-width: 1px 3px 3px 2px;
  background: var(--pale);
  color: var(--ink);
  box-shadow: 1px 1px 0 #8f8f8f;
}
.dialog-title { display: flex; align-items: center; height: 22px; padding: 0 3px 0 4px; background: #c9c9c9; color: #303030; }
.dialog-title svg { width: 14px; height: 14px; }
.dialog form { display: grid; grid-template-columns: 86px 1fr; gap: 10px 8px; align-items: center; padding: 7px; }
.dialog form input, .dialog select { width: 100%; height: 24px; padding: 0 2px; border: 1px solid var(--line); border-radius: 3px; background: #fff; color: #000; outline: 0; }
.dialog select { display: block; height: 23px; appearance: none; }
.dialog ::selection { background: #4f68c0; color: #fff; }
.select { position: relative; }
.select::before {
  content: "";
  position: absolute;
  inset: 1px 1px 1px auto;
  width: 18px;
  border-left: 1px solid #d8d2b0;
  background: linear-gradient(#fbf9ea, #ece5c6);
}
.select::after { content: ""; position: absolute; right: 5px; top: 10px; border: 5px solid transparent; border-top-color: #6b5a1e; border-bottom: 0; }
.actions { grid-column: 1 / -1; display: flex; justify-content: flex-end; gap: 10px; padding: 4px 0 3px; }
.actions button { width: 87px; height: 25px; border: 1px solid var(--line); border-radius: 3px; background: linear-gradient(#fcfaec, #efe9cd); color: #5a4c1c; }
.actions .default { box-shadow: inset 0 0 0 2px #e2d9b2; }
.pointer { position: absolute; left: 198px; top: 192px; width: 67px; height: 66px; }
```
FILE: script.js
```js
// The name field opens focused with its suggested value selected.
const nameField = document.getElementById('f-name');
nameField.focus();
nameField.select();
```
